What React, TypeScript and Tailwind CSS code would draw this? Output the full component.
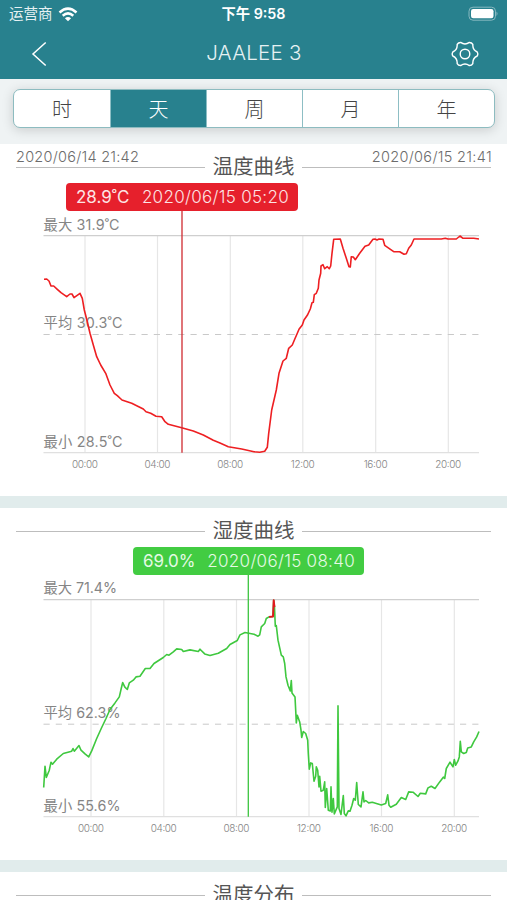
import { useState } from 'react';

type Chart = {
  title: string;
  top: number;
  ticks: number[];
  max: string;
  avg: string;
  min: string;
  avgOffset: number;
  labelWidths: [number, number, number];
  color: string;
  cursorColor: string;
  cursor: number;
  points: string;
  alert?: string;
};

const periods = ['时', '天', '周', '月', '年'];
const hours = ['00:00', '04:00', '08:00', '12:00', '16:00', '20:00'];

const temperature: Chart = {
  title: '温度曲线',
  top: 235.7,
  ticks: [85, 157.5, 230.3, 302.8, 375.7, 448.3],
  max: '最大 31.9˚C',
  avg: '平均 30.3˚C',
  min: '最小 28.5˚C',
  avgOffset: 98.8,
  labelWidths: [76, 79, 79],
  color: '#ee1f22',
  cursorColor: '#cf2a31',
  cursor: 182,
  points:
    '44,279.3 46.7,279 49,281 51,286 53.7,286 57.3,289.3 61,292.7 66.7,296.7 70,294 72,294 74,297.7 80,293.3 82.3,298.3 84.3,310 87.3,321.7 90,333.3 93.3,345 96.7,356.7 100.7,365 105.7,373.3 110,385 114.3,393.3 117.3,395.7 122,400 131.7,403.3 136.7,405.7 143.3,409 146,411.7 150.7,413.3 156,416.3 161.7,416.7 165,421.7 168.3,424.3 181.7,427.7 193.3,431 203.3,435 213.3,440.3 220,443 228.3,446.7 241.7,449 254,451.7 259.7,452.3 264.7,451.3 267.3,447.3 268.7,433.3 271.7,410 276.3,390 279,373.3 283,361 286.3,358.3 288.7,348.3 292.3,345 294.7,339.3 297,334 299,329.3 302.3,325 304,320 307.3,315.3 310.3,309 312,302.7 313.3,302.3 314.3,294.7 316.3,293.3 318.3,288.3 319,280 320.7,273.3 321,266 323,264.7 324.7,268.7 327.3,266.7 329.3,268.7 330.7,266 332,253.3 333.7,239.3 340.3,239 343,248.3 346.3,258.3 349,266.7 350.3,267 351.3,256.7 353.3,257 355.3,259.7 359.7,253.3 365,246.3 368.7,245 373,239.3 375,239 377,240 379,239 383,239.3 384.7,245.3 389,248.3 393.7,251.7 399.7,251.7 404,254.3 406.3,253.7 408.7,248.3 411.3,245 414,239 441.3,239 445.3,238.3 448,239 456.3,239 460,236 463,238.3 473.7,238.3 479,239',
};

const humidity: Chart = {
  title: '湿度曲线',
  top: 599.5,
  ticks: [91, 163.8, 236.5, 309, 381.5, 454.3],
  max: '最大 71.4%',
  avg: '平均 62.3%',
  min: '最小 55.6%',
  avgOffset: 124.5,
  labelWidths: [73.5, 77, 77],
  color: '#3fc83f',
  cursorColor: '#3cc43f',
  cursor: 248.3,
  points:
    '43.7,787.3 45,766 46.3,777.3 49.3,770 51,762 52.5,764 56.7,759 63.3,753.3 71.7,751 73,748.3 74.3,751 79,745.3 81,750 85,753.7 88.7,756.7 91.7,750.7 96.7,738.3 101.7,727.3 106,718.3 110,709.3 115,702.7 119.3,696.7 121.3,688 122.7,682.3 124.7,686.7 127.3,689.3 129.3,682.7 133.3,680 136,676.7 140,676 145.3,668.3 150,668.3 154,663.3 163.3,657.3 166.7,654.3 169,655 173.3,651.7 176.7,648.7 181.7,649.3 183.3,651.3 190,649.7 198.3,651.3 200,649 204.7,653.7 210,655.3 218.3,653 226.7,648.3 230,644.3 237.3,640.3 240,634.7 245,632.3 254,634 258,636 259.7,634.7 261.3,626.7 264.7,623.3 266.3,618.3 269,616.7 273,616.3 273.7,600 274.5,607 275.3,626 276.3,625.3 278,640 281.3,655 283.3,656.7 284.7,663.3 286,676.7 288,685 290.3,690.7 291.3,680.3 292,692.7 295,696.7 295.7,710 296.3,722.7 297.3,715 299.7,721.7 301,730 301.7,737.3 303.3,731.3 305.7,733.3 307.7,740 308.3,753.3 309.3,769 310.7,762.7 312.3,763.3 314,781 315.7,776 316.3,766.7 317.7,770 319,786.7 319.7,776 321,791 323.3,790 324.7,781.7 325.3,807.3 326.7,788.3 328.3,810 330.3,810.7 331,786.7 332,812 333.3,798.3 334.3,813.7 337.3,806.7 338,705.7 339,808.3 341,814.3 343.3,795.3 344.3,813.3 346,815.7 348.3,810.7 350,811 352,805 353.7,798.3 355.3,800 356.7,782.3 358.3,804.3 361,806.7 363,791.7 364,801.7 365.7,800.3 368.7,802.7 372.3,802 381.3,804.7 385.7,803.3 387.7,794.7 389,805 390.7,807 396.3,804 401.3,797.3 405.7,799.3 408.7,791.7 413,792 418,796.3 420.3,793 425.7,793.7 428,787.7 431.3,786 435,788.3 439.7,781.7 443.3,777 444.7,778.3 446.3,768.3 450,762 453,766.7 454.3,759.3 455.7,765 458,760.7 459.3,756.7 460.3,741 461.3,751.7 463.7,753.3 466.3,752.3 467.7,747.7 471.3,746.7 473.7,741.7 476.7,736.7 479,731.3',
  alert: '269,616.7 273,616.3 273.7,600 274.5,607',
};

function SectionTitle({ children }: { children: string }) {
  return (
    <div className="flex h-[46px] items-center px-4">
      <div className="h-px flex-1 bg-[#bdbdbd]" />
      <h2 className="w-[97px] text-center text-[20.5px] leading-[46px] font-normal whitespace-nowrap text-[#555]">{children}</h2>
      <div className="h-px flex-1 bg-[#bdbdbd]" />
    </div>
  );
}

function LineChart({ chart }: { chart: Chart }) {
  const { top } = chart;
  const bottom = top + 217;
  const avgY = top + chart.avgOffset;
  const labels = [
    { text: chart.max, y: top - 6.2 },
    { text: chart.avg, y: avgY - 6.2 },
    { text: chart.min, y: bottom - 6 },
  ];

  return (
    <svg className="block w-full" height="306" viewBox={`0 ${top - 45.7} 507 306`}>
      {/* Grid */}
      {chart.ticks.map((x, i) => (
        <g key={x}>
          <line x1={x} x2={x} y1={top} y2={bottom} stroke="#e6e6e6" strokeWidth="1.2" />
          <text x={x} y={bottom + 15.3} textAnchor="middle" fontSize="10" textLength={i === 3 || i === 4 ? 24 : 26} fill="#858585">
            {hours[i]}
          </text>
        </g>
      ))}
      <line x1="43.5" x2="479" y1={top} y2={top} stroke="#cfcfcf" strokeWidth="1.2" />
      <line x1="43.5" x2="479" y1={bottom} y2={bottom} stroke="#e0e0e0" strokeWidth="1.2" />
      <line x1="43.5" x2="479" y1={avgY} y2={avgY} stroke="#c9c9c9" strokeDasharray="6.2 6.05" />

      {labels.map((label, i) => (
        <text key={label.text} x="43.5" y={label.y} fontSize="14.3" fontWeight="400" textLength={chart.labelWidths[i]} fill="#858585">
          {label.text}
        </text>
      ))}

      {/* Series */}
      <polyline points={chart.points} fill="none" stroke={chart.color} strokeWidth="1.6" strokeLinejoin="round" />
      {chart.alert && <polyline points={chart.alert} fill="none" stroke="#e3171e" strokeWidth="1.9" strokeLinejoin="round" />}
      <line x1={chart.cursor} x2={chart.cursor} y1={top - 26} y2={bottom} stroke={chart.cursorColor} strokeWidth="1.3" />
    </svg>
  );
}

export default function App() {
  const [period, setPeriod] = useState(1);

  return (
    <div className="h-[900px] w-[507px] overflow-hidden bg-[#e1ecec] font-['Inter','Noto_Sans_CJK_SC',sans-serif] font-light">
      {/* Header */}
      <header className="h-[79px] bg-[#28818e] text-white">
        <div className="grid h-7 grid-cols-3 items-center px-[9px]">
          <div className="flex items-center gap-[5px] text-[14.5px] leading-7">
            <span className="font-normal text-[#e6f1f3]">运营商</span>
            <svg width="20" height="15" viewBox="0 0 20 15" fill="none" stroke="white" strokeWidth="2.5">
              <path d="M1.5 5.5Q10-2.2 18.5 5.5" />
              <path d="M4.7 8.8Q10 4 15.3 8.8" />
              <path d="M10 14.3 6.9 11.2Q10 8.7 13.1 11.2Z" fill="white" stroke="none" />
            </svg>
          </div>
          <div className="text-center text-[14.3px] leading-7 font-semibold whitespace-nowrap">下午 9:58</div>
          <div className="flex justify-end">
            <svg width="30" height="16" viewBox="0 0 30 16">
              <rect x="1" y="1.2" width="26.5" height="13" rx="4" fill="none" stroke="#86b8c0" />
              <rect x="3" y="3.1" width="22.5" height="9.2" rx="2.2" fill="white" />
              <path d="M28.5 5.5Q30.5 7.7 28.5 9.9Z" fill="#86b8c0" />
            </svg>
          </div>
        </div>
        <div className="flex h-[51px] items-center justify-between pr-[28px] pl-[31px]">
          <button aria-label="返回">
            <svg width="17" height="26" viewBox="0 0 17 26" fill="none" stroke="white" strokeWidth="1.5">
              <path d="M14.7 1.5 2 13 14.7 24.5" />
            </svg>
          </button>
          <h1 className="pl-[9px] text-[20.5px] font-light tracking-[0.25px] text-[#e6f1f3]">JAALEE 3</h1>
          <button aria-label="设置">
            <svg width="28" height="28" viewBox="-14 -14 28 28" fill="none" stroke="white" strokeWidth="1.4" strokeLinejoin="round">
              <path d="M12.2 2Q13.4 0 12.2-2Q7.45-4.3 7.83-9.56Q6.7-11.6 4.37-11.57Q0-8.6-4.37-11.57Q-6.7-11.6-7.83-9.56Q-7.45-4.3-12.2-2Q-13.4 0-12.2 2Q-7.45 4.3-7.83 9.56Q-6.7 11.6-4.37 11.57Q0 8.6 4.37 11.57Q6.7 11.6 7.83 9.56Q7.45 4.3 12.2 2Z" />
              <circle r="4.8" />
            </svg>
          </button>
        </div>
      </header>

      {/* Period switch */}
      <div className="h-[65px] bg-[#eff3f4] pt-[10px] pr-3 pl-[13px]">
        <div className="grid h-[39px] grid-cols-5 overflow-hidden rounded-[7px] border border-[#8dbcc0] bg-white shadow-[0_2px_12px_rgba(0,0,0,0.16)]">
          {periods.map((label, i) => (
            <button
              key={label}
              onClick={() => setPeriod(i)}
              className={`border-l border-[#8dbec4] pt-[3px] text-[20px] leading-[34px] first:border-l-0 ${i === period ? 'bg-[#28818e] text-white' : 'text-[#444]'}`}
            >
              {label}
            </button>
          ))}
        </div>
      </div>

      {/* Temperature */}
      <section className="relative h-[352px] bg-white">
        <span className="absolute top-1 left-4 text-[14.5px] leading-[18px] tracking-[0.25px] text-[#6c6c6c]">2020/06/14 21:42</span>
        <span className="absolute top-1 right-[15px] text-[14.5px] leading-[18px] tracking-[0.32px] text-[#6c6c6c]">2020/06/15 21:41</span>
        <SectionTitle>{temperature.title}</SectionTitle>
        <LineChart chart={temperature} />
        <div className="absolute top-[39px] left-[66px] flex h-7 w-[232px] items-center justify-between rounded bg-[#e6202c] pt-px pr-[9px] pl-[10px] text-[17px] whitespace-nowrap text-[#fde4e5]">
          <span className="font-normal">28.9˚C</span>
          <span className="tracking-[0.3px]">2020/06/15 05:20</span>
        </div>
      </section>

      {/* Humidity */}
      <section className="relative mt-3 h-[352px] bg-white">
        <SectionTitle>{humidity.title}</SectionTitle>
        <LineChart chart={humidity} />
        <div className="absolute top-[39px] left-[133px] flex h-7 w-[231px] items-center justify-between rounded bg-[#42cc42] pt-px pr-[9px] pl-[10px] text-[17px] whitespace-nowrap text-[#e5fae5]">
          <span className="font-normal">69.0%</span>
          <span className="tracking-[0.3px]">2020/06/15 08:40</span>
        </div>
      </section>

      {/* Distribution */}
      <section className="mt-3 h-[352px] bg-white">
        <SectionTitle>温度分布</SectionTitle>
      </section>
    </div>
  );
}
